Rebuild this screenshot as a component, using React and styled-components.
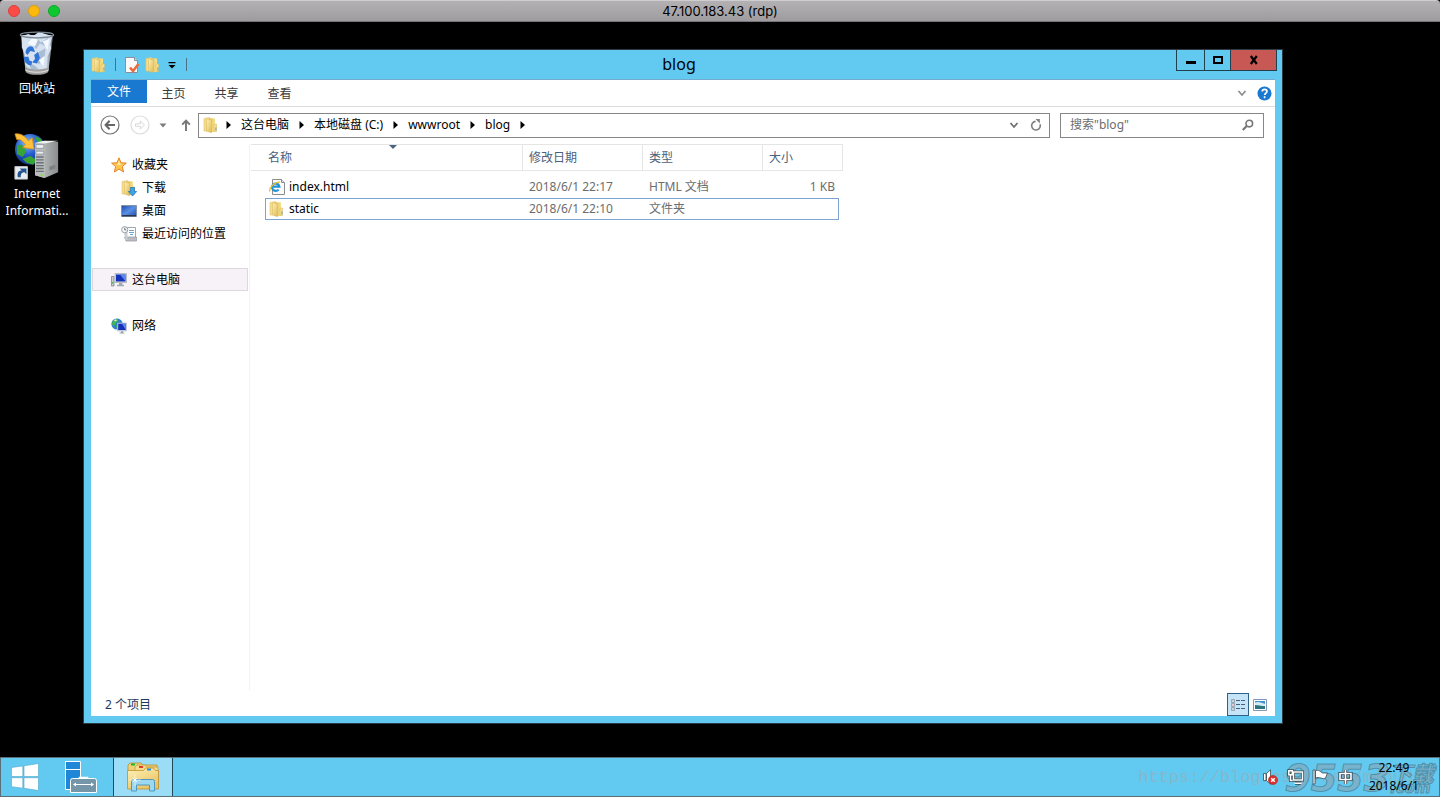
import React from "react";
import styled, { createGlobalStyle, css } from "styled-components";

const sky = "#62caf0";
const uiFont = `"Noto Sans", "Noto Sans CJK SC", sans-serif`;

const GlobalStyle = createGlobalStyle`
  *, *::before, *::after { box-sizing: border-box; }
  body { margin: 0; background: #000; font: 12px/16px ${uiFont}; color: #000; }
  button, input { font: inherit; color: inherit; border: 0; padding: 0; margin: 0; background: none; border-radius: 0; }
  a { color: inherit; text-decoration: none; }
  ul { list-style: none; margin: 0; padding: 0; }
  svg { display: block; flex: none; }
`;

const Screen = styled.div`
  display: flex;
  flex-direction: column;
  min-height: 100vh;
`;

/* ---------- session title bar ---------- */

const SessionBar = styled.header`
  display: grid;
  grid-template-columns: 1fr auto 1fr;
  align-items: center;
  height: 22px;
  padding: 0 8px;
  background: linear-gradient(#b3b1b3, #9f9ca0);
  border-top: 1px solid #cfcdd0;
  border-bottom: 1px solid #77757a;
  border-radius: 4px 4px 0 0;
`;

const SessionTitle = styled.h1`
  margin: 0;
  font: 400 13px/20px Inter, sans-serif;
`;

const Lights = styled.div`
  display: flex;
  gap: 8px;
`;

const Light = styled.button`
  width: 12px;
  height: 12px;
  border-radius: 50%;
  background: ${(p) => p.$fill};
  border: 1px solid ${(p) => p.$edge};
`;

/* ---------- desktop ---------- */

const Desktop = styled.main`
  display: flex;
  flex: 1;
  background: #000;
`;

const Shortcuts = styled.div`
  display: flex;
  flex-direction: column;
  gap: 36px;
  width: 74px;
  padding-top: 8px;
  margin-right: 9px;
`;

const Shortcut = styled.button`
  display: flex;
  flex-direction: column;
  align-items: center;
  gap: 4px;
  color: #fff;
  line-height: 17px;
`;

const Explorer = styled.section`
  display: flex;
  flex-direction: column;
  flex: 1;
  margin: 27px 157px 33px 0;
  padding: 0 7px 7px;
  background: ${sky};
  border: 1px solid #2b3b44;
`;

const TitleBar = styled.div`
  display: grid;
  grid-template-columns: 1fr auto 1fr;
  height: 30px;
  border-bottom: 1px solid #74acd0;
`;

const QuickAccess = styled.div`
  display: flex;
  align-items: center;
  gap: 5px;
`;

const Separator = styled.span`
  width: 1px;
  height: 13px;
  margin: 0 3px;
  background: #4d7186;
`;

const Title = styled.h2`
  margin: 0;
  padding-right: 8px;
  font-size: 16px;
  font-weight: 400;
  line-height: 28px;
`;

const WindowButtons = styled.div`
  display: flex;
  justify-self: end;
  margin-right: -2px;
  height: 21px;
  border: solid #21404e;
  border-width: 0 1px 1px;
`;

const WindowButton = styled.button`
  display: flex;
  align-items: center;
  justify-content: center;
  width: ${(p) => p.$width}px;
  background: ${(p) => (p.$close ? "#c75853" : "transparent")};
  & + & { border-left: 1px solid #21404e; }
`;

const Content = styled.div`
  display: flex;
  flex-direction: column;
  flex: 1;
  background: #fff;
`;

const Ribbon = styled.div`
  display: flex;
  align-items: flex-start;
  height: 27px;
  border-bottom: 1px solid #dadbdc;
`;

const RibbonTab = styled.button`
  width: 53px;
  height: 26px;
  padding-top: 2px;
  color: #3a3a3a;
  ${(p) =>
    p.$file &&
    css`
      width: 56px;
      height: 23px;
      padding-top: 0;
      background: #1979d0;
      color: #fff;
    `}
`;

const RibbonTools = styled.div`
  display: flex;
  align-items: center;
  gap: 10px;
  height: 26px;
  margin-left: auto;
  padding-right: 3px;
`;

const NavBar = styled.div`
  display: flex;
  align-items: center;
  height: 37px;
  padding: 0 11px 1px 8px;
`;

const NavButtons = styled.div`
  display: flex;
  align-items: center;
  gap: 8px;
  margin-right: 1px;
`;

const NavButton = styled.button`
  display: flex;
  align-items: center;
  justify-content: center;
  width: ${(p) => (p.$narrow ? 8 : 22)}px;
  height: 22px;
`;

const AddressBar = styled.div`
  display: flex;
  align-items: center;
  flex: 1;
  height: 25px;
  margin-right: 10px;
  padding: 0 2px 0 4px;
  border: 1px solid #868686;
`;

const Crumbs = styled.ul`
  display: flex;
  align-items: center;
  flex: 1;
  margin-left: 7px;
`;

const Crumb = styled.li`
  display: flex;
  align-items: center;
  gap: 10px;
  margin-right: 10px;
`;

const ToolButton = styled.button`
  display: flex;
  align-items: center;
  justify-content: center;
  width: 22px;
  height: 22px;
`;

const SearchBox = styled.form`
  display: flex;
  align-items: center;
  width: 204px;
  height: 25px;
  padding: 0 4px 0 9px;
  border: 1px solid #868686;
`;

const SearchInput = styled.input`
  flex: 1;
  min-width: 0;
  outline: 0;
  &::placeholder { color: #6d6d6d; opacity: 1; }
`;

const Body = styled.div`
  display: flex;
  flex: 1;
`;

const Sidebar = styled.nav`
  display: flex;
  flex-direction: column;
  gap: 23px;
  width: 159px;
  padding: 9px 1px 0;
  border-right: 1px solid #f3f3f4;
`;

const Place = styled.a`
  display: flex;
  align-items: center;
  gap: 5px;
  height: 23px;
  padding-left: ${(p) => (p.$nested ? 28 : 18)}px;
  border: 1px solid ${(p) => (p.$selected ? "#dcd8dc" : "transparent")};
  background: ${(p) => (p.$selected ? "#f7f2f7" : "transparent")};
`;

const FileTable = styled.table`
  align-self: flex-start;
  width: 592px;
  margin-left: 1px;
  table-layout: fixed;
  border-collapse: separate;
  border-spacing: 0;
  tbody::before { content: ""; display: table-row; height: 5px; }
`;

const HeadCell = styled.th`
  position: relative;
  width: ${(p) => p.$width}px;
  height: 27px;
  padding: 0 6px;
  border: 1px solid #e5e5e5;
  border-left: 0;
  color: #4c607a;
  font-weight: 400;
  text-align: left;
  &:first-child { padding-left: 17px; }
`;

const SortMark = styled.svg`
  position: absolute;
  top: 0;
  left: 50%;
`;

const FileRow = styled.tr`
  position: relative;
  ${(p) =>
    p.$focused &&
    css`
      &::after {
        content: "";
        position: absolute;
        inset: 0 4px 0 14px;
        border: 1px solid #7aa5d0;
      }
    `}
`;

const Cell = styled.td`
  height: 22px;
  padding: 0 8px 0 6px;
  color: #6d6d6d;
  text-align: ${(p) => (p.$right ? "right" : "left")};
`;

const NameCell = styled.td`
  height: 22px;
  padding: 0 0 0 18px;
  color: #000;
`;

const FileName = styled.span`
  display: flex;
  align-items: center;
  gap: 4px;
`;

const StatusBar = styled.footer`
  display: flex;
  align-items: flex-end;
  justify-content: space-between;
  height: 25px;
  padding: 0 4px 0 14px;
  color: #1e395b;
  line-height: 22px;
`;

const ViewButtons = styled.div`
  display: flex;
`;

const ViewButton = styled.button`
  display: flex;
  align-items: center;
  justify-content: center;
  width: 22px;
  height: 23px;
  border: 1px solid ${(p) => (p.$active ? "#2c628b" : "transparent")};
  background: ${(p) => (p.$active ? "#c5e4f7" : "transparent")};
`;

/* ---------- taskbar ---------- */

const Taskbar = styled.footer`
  position: relative;
  display: flex;
  height: 40px;
  background: ${sky};
  border: 1px solid #5b6f78;
`;

const TaskButton = styled.button`
  display: flex;
  align-items: center;
  justify-content: center;
  width: ${(p) => p.$width}px;
  border: solid ${(p) => (p.$active ? "#23485a" : "transparent")};
  border-width: 0 1px;
  background: ${(p) => (p.$active ? "#9bdcf7" : "transparent")};
`;

const Tray = styled.div`
  position: relative;
  display: flex;
  align-items: center;
  gap: 8px;
  margin-left: auto;
`;

const TrayButton = styled.button`
  display: flex;
  width: 17px;
`;

const Clock = styled.time`
  margin: 0 20px 0 7px;
  line-height: 18px;
  text-align: center;
`;

const LinkMark = styled.span`
  position: absolute;
  right: 5px;
  top: 8px;
  font: 17px/24px "Liberation Mono", monospace;
  color: rgba(165, 165, 165, 0.5);
  white-space: nowrap;
`;

const SiteMark = styled.span`
  position: absolute;
  right: 5px;
  top: 4px;
  display: flex;
  color: rgba(128, 172, 194, 0.75);
  font: italic 700 38px/32px "DejaVu Sans", sans-serif;
  -webkit-text-stroke: 1px rgba(60, 115, 140, 0.6);
`;

const SiteMarkEnd = styled.span`
  display: flex;
  flex-direction: column;
  font: italic 700 22px/21px "Noto Sans CJK SC", sans-serif;
`;

const SiteMarkSmall = styled.small`
  font: italic 700 15px/10px "DejaVu Sans", sans-serif;
`;

/* ---------- icons ---------- */

const FolderIcon = ({ arrow }) => (
  <svg width="16" height="16" viewBox="0 0 16 16" aria-hidden="true">
    <defs>
      <linearGradient id="folderFront" x1="0" x2="1" y2="1">
        <stop offset="0" stopColor="#fff2bb" />
        <stop offset="1" stopColor="#dfb94f" />
      </linearGradient>
      <linearGradient id="folderSide" x1="0" x2="1">
        <stop offset="0" stopColor="#e3c25f" />
        <stop offset="1" stopColor="#f6e08c" />
      </linearGradient>
    </defs>
    <path d="M1 1.500L6.500.5v13.500L1 14z" fill="#f4dd8c" stroke="#e3c570" strokeWidth=".6" />
    <path d="M6 1l6 .5v13.500L6 15z" fill="url(#folderSide)" />
    <path d="M3.500 1.800L8.500 3.200v12.600L3.500 14z" fill="url(#folderFront)" stroke="#d9b75a" strokeWidth=".5" />
    <path d="M11 7h2.500v7.500H11z" fill="#f5df90" stroke="#dcb95a" strokeWidth=".5" />
    {arrow ? (
      <path d="M9.500 7.500h4v4h2.200L11.500 16l-4.200-4.500h2.200z" fill="#3aa5ea" stroke="#1b6db4" strokeWidth=".7" />
    ) : (
      <path d="M12.400 10.500h1v3h-1z" fill="#5aa7d8" />
    )}
  </svg>
);

const PropertiesIcon = () => (
  <svg width="16" height="16" viewBox="0 0 16 16" aria-hidden="true">
    <path d="M1.500.5h9l3 3v12h-12z" fill="#fafafa" stroke="#8a8f99" />
    <path d="M10.500.5v3h3" fill="#d9dde2" stroke="#8a8f99" />
    <path d="M6 10.500l3 3.500 5.500-7" fill="none" stroke="#ec6a3a" strokeWidth="2.600" />
  </svg>
);

const MenuArrowIcon = () => (
  <svg width="12" height="8" viewBox="0 0 12 8" aria-hidden="true">
    <path d="M2.500 1h7v1.200h-7zM2.500 4h7L6 7.600z" fill="#000" />
  </svg>
);

const MinimizeIcon = () => (
  <svg width="10" height="10" viewBox="0 0 10 10" aria-hidden="true">
    <path d="M0 6h10v3H0z" />
  </svg>
);
const MaximizeIcon = () => (
  <svg width="10" height="10" viewBox="0 0 10 10" aria-hidden="true">
    <path d="M1 2h8v6H1z" fill="none" stroke="#000" strokeWidth="2" />
  </svg>
);
const CloseIcon = () => (
  <svg width="10" height="10" viewBox="0 0 10 10" aria-hidden="true">
    <path d="M1.800 1l6 8M7.800 1l-6 8" fill="none" stroke="#000" strokeWidth="2.200" />
  </svg>
);

const ChevronIcon = ({ color = "#8e8e8e" }) => (
  <svg width="10" height="8" viewBox="0 0 10 8" aria-hidden="true">
    <path d="M1.500 2L5 6l3.500-4" fill="none" stroke={color} strokeWidth="1.800" />
  </svg>
);

const HelpIcon = () => (
  <svg width="15" height="15" viewBox="0 0 15 15" aria-hidden="true">
    <circle cx="7.500" cy="7.500" r="7" fill="#1979d0" />
    <path d="M5.300 5.600c0-3 4.600-2.800 4.600-.2 0 1.700-2.200 1.700-2.200 3.600M7.600 10.200v2" fill="none" stroke="#fff" strokeWidth="1.700" />
  </svg>
);

const CircleArrowIcon = ({ forward }) => (
  <svg width="20" height="20" viewBox="0 0 20 20" aria-hidden="true">
    <circle cx="10" cy="10" r="9" fill="none" stroke={forward ? "#dcdcdc" : "#757575"} strokeWidth="1.200" />
    {forward ? (
      <path d="M5.500 8.800h4.800V6l4.200 4-4.200 4v-2.800H5.500z" fill="none" stroke="#d8d8d8" />
    ) : (
      <path d="M15 10H6M9.600 5.800L5.600 10l4 4.200" fill="none" stroke="#666" strokeWidth="2" />
    )}
  </svg>
);

const DownTriangleIcon = () => (
  <svg width="8" height="5" viewBox="0 0 8 5" aria-hidden="true">
    <path d="M.5.5h7L4 4.500z" fill="#7c7c7c" />
  </svg>
);
const UpIcon = () => (
  <svg width="10" height="12" viewBox="0 0 10 12" aria-hidden="true">
    <path d="M5 12V2M1.200 5.600L5 1.600l3.800 4" fill="none" stroke="#757575" strokeWidth="1.900" />
  </svg>
);
const CrumbArrowIcon = () => (
  <svg width="5" height="8" viewBox="0 0 5 8" aria-hidden="true">
    <path d="M.5 0L5 4 .5 8z" />
  </svg>
);
const RefreshIcon = () => (
  <svg width="12" height="12" viewBox="0 0 12 12" aria-hidden="true">
    <path d="M10 5.200A4.300 4.300 0 1 1 5.600 2.400" fill="none" stroke="#808080" strokeWidth="1.600" />
    <path d="M5.500 0h4.300v4.600z" fill="#808080" />
  </svg>
);
const SearchIcon = () => (
  <svg width="12" height="12" viewBox="0 0 12 12" aria-hidden="true">
    <circle cx="7.300" cy="4.600" r="3.300" fill="none" stroke="#777" strokeWidth="1.600" />
    <path d="M4.800 7L.8 11" stroke="#777" strokeWidth="2.200" />
  </svg>
);

const StarIcon = () => (
  <svg width="16" height="16" viewBox="0 0 16 16" aria-hidden="true">
    <path d="M8 .8l2 5 5.300.3-4 3.500 1.300 5.400L8 12.100 3.400 15l1.200-5.400-4-3.500L6 5.800z" fill="#fcc650" stroke="#e38426" />
    <path d="M8 3.500l1 3.300 3 .3-5.500 1z" fill="#fff0b0" />
  </svg>
);
const DesktopIcon = () => (
  <svg width="16" height="14" viewBox="0 0 16 14" aria-hidden="true">
    <defs>
      <linearGradient id="deskFill" x2="1" y2="1">
        <stop offset="0" stopColor="#1c48a8" />
        <stop offset=".5" stopColor="#5a90e4" />
        <stop offset="1" stopColor="#1b4aac" />
      </linearGradient>
    </defs>
    <path d="M.5 1.500h15v11H.5z" fill="url(#deskFill)" stroke="#8493a8" />
    <path d="M1 11h14v1.400H1z" fill="#28374f" />
  </svg>
);
const RecentIcon = () => (
  <svg width="16" height="16" viewBox="0 0 16 16" aria-hidden="true">
    <path d="M5.500 1.500h9v10h-9z" fill="#fff" stroke="#a4a6a8" />
    <path d="M8 4.500h5M8 6.500h5M9 8.500h3" stroke="#6fa3cc" strokeWidth="1.200" />
    <path d="M5 11h10.500v4H5l-1.500-4z" fill="#b9bdc2" stroke="#9b9fa4" strokeWidth=".8" />
    <path d="M3 6h3.500v8H4.500z" fill="#c9ccd0" />
    <circle cx="3.700" cy="3.700" r="3.100" fill="#f4f6f8" stroke="#9aa1a8" />
    <path d="M3.700 1.800v2.100h1.600" fill="none" stroke="#555" strokeWidth=".8" />
  </svg>
);
const ComputerIcon = () => (
  <svg width="16" height="16" viewBox="0 0 16 16" aria-hidden="true">
    <path d="M.5 4.500H3v9.500H.5z" fill="#c8ccd0" stroke="#81878d" strokeWidth=".8" />
    <path d="M1 10h1.500v1.600H1z" fill="#4fb64b" />
    <path d="M4 1.500h11.500v9H4z" fill="#d8dde3" stroke="#a9b1ba" strokeWidth=".8" />
    <path d="M5 2.500h9.500v7H5z" fill="#1431b8" />
    <path d="M9 2.500h5.500v7z" fill="#5e86ee" />
    <path d="M8 11h3.400v1.800H13v1.400H6v-1.400h2z" fill="#a2a8af" />
  </svg>
);
const NetworkIcon = () => (
  <svg width="16" height="16" viewBox="0 0 16 16" aria-hidden="true">
    <circle cx="6" cy="6" r="5.600" fill="#2f7fd0" />
    <path d="M2 2.500l4-1.800 1.500 2L5 5 3 8.500.8 6zM5 8l3-2 1 3-3 2z" fill="#43b549" />
    <path d="M3 2.200l2-1 1 1.300-2 1z" fill="#d9f0c8" />
    <path d="M6.500 5h9v8h-9z" fill="#ccd6e0" stroke="#a5b3c2" strokeWidth=".6" />
    <path d="M7.200 5.700h7.600V12H7.200z" fill="#1431b8" />
    <path d="M11 5.700h3.800V12z" fill="#5e86ee" />
    <path d="M10 13.200h2v1.400h1.400v1H8.600v-1H10z" fill="#98a2ac" />
  </svg>
);
const HtmlIcon = () => (
  <svg width="16" height="16" viewBox="0 0 16 16" aria-hidden="true">
    <path d="M3.500.5h9l3 3v12h-12z" fill="#fbfbfb" stroke="#8d8d8d" />
    <path d="M12.500.5v3h3" fill="#e4e4e4" stroke="#8d8d8d" />
    <path d="M9.600 10.600a3.700 3.700 0 1 1 .8-2.900H3.500" fill="none" stroke="#2292d8" strokeWidth="2.200" />
    <path d="M1 12.600C-.8 9.500 5.500 2.800 11 3.200" fill="none" stroke="#f2c230" strokeWidth="1.300" />
  </svg>
);

const DetailsViewIcon = () => (
  <svg width="16" height="14" viewBox="0 0 16 14" aria-hidden="true">
    {[0, 4, 8].map((y, i) => (
      <g key={y}>
        <path d={`M1.500 ${y + 1.5}h3v3h-3z`} fill="#fff" stroke="#8796a5" strokeWidth=".8" />
        <path d={`M2.500 ${y + 2.5}h1v1h-1z`} fill={i === 1 ? "#d02020" : "#30506c"} />
        <path d={`M6 ${y + 2.5}h4M11 ${y + 2.5}h4`} stroke="#46627c" />
      </g>
    ))}
  </svg>
);
const LargeViewIcon = () => (
  <svg width="14" height="12" viewBox="0 0 14 12" aria-hidden="true">
    <path d="M.5.5h13v11H.5z" fill="#fff" stroke="#8496b4" />
    <path d="M2 2h10v8H2z" fill="#3f93d4" />
    <path d="M2 3.500c4-1.500 6 0 10 1.500v2H2z" fill="#d5ecf4" />
    <path d="M2 6c3 0 6 1 10 1.500V10H2z" fill="#2b7480" />
  </svg>
);

const RecycleBinIcon = () => (
  <svg width="38" height="46" viewBox="0 0 40 48" aria-hidden="true">
    <defs>
      <linearGradient id="binGlass" x2="1">
        <stop offset="0" stopColor="#8796a5" />
        <stop offset=".25" stopColor="#c3d4e4" />
        <stop offset=".75" stopColor="#dbe5f0" />
        <stop offset="1" stopColor="#56626e" />
      </linearGradient>
    </defs>
    <path d="M3 5h34l-5 38c-3 4-21 4-24 0z" fill="url(#binGlass)" />
    <path d="M4 6l7-2 5 2 6-4 7 2 7 2-2 9 1 4-4 9-1 11-7 4-9-1-6-5-1-12-3-7z" fill="#d6e2ef" />
    <path d="M7 9l8 3 4-5 5 6 8-5-3 9-6-3-4 6-5-8zM20 24l9-5-1 9-6 8-3-4zM11 34l6 3 5 4-8 1z" fill="#aabdd2" />
    <path d="M16 7l5 3-3 7-8-3zM26 12l7-3-2 12zM22 32l6-5-1 11z" fill="#f4f9ff" />
    <ellipse cx="20" cy="5" rx="17.500" ry="3" fill="none" stroke="#7f8c98" strokeWidth="1.300" />
    <path d="M7.500 39c5 3 20 3 25 0l-.8 5c-4 4-20 4-23.500 0z" fill="#a0a0a0" />
    <path d="M8 42c6 3 18 3 24 0" fill="none" stroke="#e6e6e6" />
    <g fill="#2f74d8">
      <path d="M8 24c0-5 4-9 8-6l2 5-5-1-3 4z" />
      <path d="M17 26l4-3 2 6-3 6-5-1 3-4z" />
      <path d="M6 28l5 0 1 4 3 1-1 4c-5 0-8-4-8-9z" />
    </g>
  </svg>
);

const ServerIcon = () => (
  <svg width="48" height="48" viewBox="0 0 48 50" aria-hidden="true">
    <defs>
      <radialGradient id="globe" cx=".4" cy=".3" r=".75">
        <stop offset="0" stopColor="#8cc3f8" />
        <stop offset=".5" stopColor="#245bd0" />
        <stop offset="1" stopColor="#0d2470" />
      </radialGradient>
      <linearGradient id="tower" x2="1">
        <stop offset="0" stopColor="#c9cccb" />
        <stop offset="1" stopColor="#8a8d8d" />
      </linearGradient>
    </defs>
    <circle cx="17" cy="17" r="16" fill="url(#globe)" />
    <path d="M3 13l5-1 5 7-4 6-6-3zM22 3l6 3 3 5-6 1zM9 27l8-3 7 4-4 5-7-2z" fill="#38a435" />
    <path d="M1 1c6-1 10 2 14 7l4-3 2 12-12-2 3-3C9 8 6 6 3 7z" fill="#ffc23a" stroke="#d98912" strokeWidth=".8" />
    <path d="M22 11l9-3 15 1v32l-14 6-10-3z" fill="url(#tower)" />
    <path d="M22 11l10-1v37l-10-3z" fill="#b9bdbf" />
    <path d="M23 12h8v4h-8zM23 19h8v3h-8z" fill="#eceded" stroke="#777c80" strokeWidth=".6" />
    <path d="M23 25h8M23 28h8M23 31h8M23 34h8M23 37h8M23 40h8" stroke="#6a7074" strokeWidth="1.400" />
    <path d="M22 10l10-2h14l-14 3z" fill="#eff0f0" />
    <path d="M37 35l6-2v4l-6 2z" fill="#7d8182" />
    <circle cx="29" cy="44" r="1.200" fill="#82e026" />
    <path d="M1 35h13v13H1z" fill="#e8ecf0" stroke="#c3c9cf" />
    <path d="M4 46c-1-5 1-7 4-7l-2-2h7v6l-2-2c-3 0-4 2-4 5z" fill="#22558f" />
  </svg>
);

const StartIcon = () => (
  <svg width="28" height="28" viewBox="0 0 28 28" aria-hidden="true">
    <path d="M.5 4.500L11.800 3v10.500H.5zM13 2.800L27.500.5v13H13zM.5 14.700h11.300v10.500L.5 23.700zM13 14.700h14.500v12.800L13 25.300z" fill="#fff" stroke="#4ca6cb" strokeWidth=".6" />
  </svg>
);
const ServerManagerIcon = () => (
  <svg width="34" height="34" viewBox="0 0 34 34" aria-hidden="true">
    <path d="M1.500 1.500h15v28h-15z" fill="#1f87d8" stroke="#fff" />
    <path d="M1.500 9.500h15" stroke="#fff" />
    <path d="M15.500 20v-2.500h8V20" fill="none" stroke="#fff" strokeWidth="1.500" />
    <path d="M6.500 20.500q0-2 2-2h22q2 0 2 2v12h-26z" fill="#7596a8" stroke="#fff" />
    <path d="M10 24.500h19" stroke="#fff" />
    <path d="M12 22.500v4l-3-2zM27 22.500v4l3-2z" fill="#fff" />
  </svg>
);
const ExplorerIcon = () => (
  <svg width="34" height="32" viewBox="0 0 34 32" aria-hidden="true">
    <defs>
      <linearGradient id="explorerFolder" x2=".6" y2="1">
        <stop offset="0" stopColor="#fff2b9" />
        <stop offset="1" stopColor="#e8c362" />
      </linearGradient>
    </defs>
    <path d="M2 4l2-2h11l2 2h14v22H2z" fill="#ecd07a" stroke="#b88e2e" strokeWidth=".8" />
    <path d="M5 2.500h4v2H5z" fill="#18b62b" />
    <path d="M9 6l2-2h8l2 2h11v20H9z" fill="#f4dc8b" stroke="#c79f3e" strokeWidth=".8" />
    <path d="M13 5h4v2h-4z" fill="#df3c29" />
    <path d="M1.500 9.500h16l2-2.500h8l2 2.500h3V28h-31z" fill="url(#explorerFolder)" stroke="#c2922d" strokeWidth=".8" />
    <path d="M21 7.500h4v2h-4z" fill="#2590e2" />
    <path d="M5.500 30V20.500q0-2 2-2h19q2 0 2 2V30h-5v-6h-13v6z" fill="#9bd8f2" stroke="#5098bf" />
    <path d="M9 13v12M3 19h12" stroke="#fff" opacity=".6" />
    <path d="M7 17l4 4M11 17l-4 4" stroke="#fff" />
  </svg>
);

const SpeakerIcon = () => (
  <svg width="17" height="16" viewBox="0 0 17 16" aria-hidden="true">
    <path d="M1.500 4.500H4v7H1.500zM4.500 4.500L8.500.8v14.400l-4-3.700z" fill="#fff" stroke="#3b4a52" strokeWidth=".8" />
    <circle cx="11" cy="11" r="4.600" fill="#d9302c" stroke="#a82020" strokeWidth=".5" />
    <path d="M9.200 9.200l3.600 3.600M12.800 9.200l-3.600 3.600" stroke="#fff" strokeWidth="1.500" />
  </svg>
);
const WiredIcon = () => (
  <svg width="17" height="16" viewBox="0 0 17 16" aria-hidden="true">
    <g fill="none" stroke="#394850" strokeWidth="3">
      <path d="M6.500 3h9v8h-9zM8 14.200h6M1.800 1.800h3.500v4H1.800zM3.500 6v5.500h2" />
    </g>
    <g fill="none" stroke="#fff" strokeWidth="1.500">
      <path d="M6.500 3h9v8h-9zM7.500 14.200h7M1.800 1.800h3.500v4H1.800zM3.500 6v5.500h2" />
    </g>
  </svg>
);
const FlagIcon = () => (
  <svg width="17" height="16" viewBox="0 0 17 16" aria-hidden="true">
    <path d="M1 1h2v14H1zM3.500 2c3-2 5 1 7 2h5l-2 5c-3 2-6-2-10 0z" fill="#fff" stroke="#3b4a52" strokeWidth=".8" />
  </svg>
);
const InputMethodIcon = () => (
  <svg width="17" height="16" viewBox="0 0 17 16" aria-hidden="true">
    <path d="M3 4.500h11v6H3zM8.500 1v14" fill="none" stroke="#34444c" strokeWidth="3.200" />
    <path d="M3 4.500h11v6H3zM8.500 1v14" fill="none" stroke="#fff" strokeWidth="1.600" />
  </svg>
);

/* ---------- data ---------- */

const tabs = ["主页", "共享", "查看"];
const path = ["这台电脑", "本地磁盘 (C:)", "wwwroot", "blog"];

const places = [
  [
    { label: "收藏夹", icon: <StarIcon /> },
    { label: "下载", icon: <FolderIcon arrow />, nested: true },
    { label: "桌面", icon: <DesktopIcon />, nested: true },
    { label: "最近访问的位置", icon: <RecentIcon />, nested: true },
  ],
  [{ label: "这台电脑", icon: <ComputerIcon />, selected: true }],
  [{ label: "网络", icon: <NetworkIcon /> }],
];

const columns = [
  { label: "名称", width: 272, sorted: true },
  { label: "修改日期", width: 120 },
  { label: "类型", width: 120 },
  { label: "大小", width: 80 },
];

const files = [
  { name: "index.html", date: "2018/6/1 22:17", type: "HTML 文档", size: "1 KB", icon: <HtmlIcon /> },
  { name: "static", date: "2018/6/1 22:10", type: "文件夹", size: "", icon: <FolderIcon />, focused: true },
];

const trayItems = [
  { label: "音量", icon: <SpeakerIcon /> },
  { label: "网络", icon: <WiredIcon /> },
  { label: "操作中心", icon: <FlagIcon /> },
  { label: "输入法", icon: <InputMethodIcon /> },
];

export default function App() {
  return (
    <Screen>
      <GlobalStyle />
      <SessionBar>
        <Lights>
          <Light $fill="#fc4b47" $edge="#d9413d" aria-label="Close" />
          <Light $fill="#fdb90b" $edge="#dd9f0c" aria-label="Minimize" />
          <Light $fill="#0dc92e" $edge="#0ba827" aria-label="Zoom" />
        </Lights>
        <SessionTitle>47.100.183.43 (rdp)</SessionTitle>
      </SessionBar>

      <Desktop>
        <Shortcuts>
          <Shortcut>
            <RecycleBinIcon />
            <span>回收站</span>
          </Shortcut>
          <Shortcut>
            <ServerIcon />
            <span>Internet<br />Informati...</span>
          </Shortcut>
        </Shortcuts>

        <Explorer>
          <TitleBar>
            <QuickAccess>
              <FolderIcon />
              <Separator />
              <PropertiesIcon />
              <FolderIcon />
              <MenuArrowIcon />
              <Separator />
            </QuickAccess>
            <Title>blog</Title>
            <WindowButtons>
              <WindowButton $width={27} aria-label="最小化"><MinimizeIcon /></WindowButton>
              <WindowButton $width={26} aria-label="最大化"><MaximizeIcon /></WindowButton>
              <WindowButton $width={46} $close aria-label="关闭"><CloseIcon /></WindowButton>
            </WindowButtons>
          </TitleBar>

          <Content>
            <Ribbon>
              <RibbonTab $file>文件</RibbonTab>
              {tabs.map((t) => <RibbonTab key={t}>{t}</RibbonTab>)}
              <RibbonTools>
                <button aria-label="展开功能区"><ChevronIcon /></button>
                <button aria-label="帮助"><HelpIcon /></button>
              </RibbonTools>
            </Ribbon>

            <NavBar>
              <NavButtons>
                <NavButton aria-label="后退"><CircleArrowIcon /></NavButton>
                <NavButton aria-label="前进"><CircleArrowIcon forward /></NavButton>
                <NavButton $narrow aria-label="最近位置"><DownTriangleIcon /></NavButton>
                <NavButton aria-label="上移"><UpIcon /></NavButton>
              </NavButtons>
              <AddressBar>
                <FolderIcon />
                <Crumbs>
                  <Crumb><CrumbArrowIcon /></Crumb>
                  {path.map((p) => (
                    <Crumb key={p}>
                      <button>{p}</button>
                      <CrumbArrowIcon />
                    </Crumb>
                  ))}
                </Crumbs>
                <ToolButton aria-label="以前的位置"><ChevronIcon color="#6f6f6f" /></ToolButton>
                <ToolButton aria-label="刷新"><RefreshIcon /></ToolButton>
              </AddressBar>
              <SearchBox onSubmit={(e) => e.preventDefault()}>
                <SearchInput type="text" aria-label="搜索" placeholder={'搜索"blog"'} />
                <ToolButton aria-label="搜索"><SearchIcon /></ToolButton>
              </SearchBox>
            </NavBar>

            <Body>
              <Sidebar>
                {places.map((group) => (
                  <ul key={group[0].label}>
                    {group.map((p) => (
                      <li key={p.label}>
                        <Place href="#" $nested={p.nested} $selected={p.selected}>
                          {p.icon}
                          {p.label}
                        </Place>
                      </li>
                    ))}
                  </ul>
                ))}
              </Sidebar>
              <FileTable>
                <thead>
                  <tr>
                    {columns.map((c) => (
                      <HeadCell key={c.label} $width={c.width} scope="col">
                        {c.label}
                        {c.sorted && (
                          <SortMark width="11" height="5" viewBox="0 0 11 5" aria-hidden="true">
                            <path d="M2 0h8L6 4z" fill="#4c6482" />
                          </SortMark>
                        )}
                      </HeadCell>
                    ))}
                  </tr>
                </thead>
                <tbody>
                  {files.map((f) => (
                    <FileRow key={f.name} $focused={f.focused}>
                      <NameCell><FileName>{f.icon}{f.name}</FileName></NameCell>
                      <Cell>{f.date}</Cell>
                      <Cell>{f.type}</Cell>
                      <Cell $right>{f.size}</Cell>
                    </FileRow>
                  ))}
                </tbody>
              </FileTable>
            </Body>

            <StatusBar>
              <span>2 个项目</span>
              <ViewButtons>
                <ViewButton $active aria-label="详细信息"><DetailsViewIcon /></ViewButton>
                <ViewButton aria-label="大图标"><LargeViewIcon /></ViewButton>
              </ViewButtons>
            </StatusBar>
          </Content>
        </Explorer>
      </Desktop>

      <Taskbar>
        <TaskButton $width={48} aria-label="开始"><StartIcon /></TaskButton>
        <TaskButton $width={64} aria-label="服务器管理器"><ServerManagerIcon /></TaskButton>
        <TaskButton $width={60} $active aria-label="文件资源管理器"><ExplorerIcon /></TaskButton>
        <LinkMark>https://blog.csdn.net/mihudie</LinkMark>
        <SiteMark>
          9553
          <SiteMarkEnd>
            下载
            <SiteMarkSmall>.com</SiteMarkSmall>
          </SiteMarkEnd>
        </SiteMark>
        <Tray>
          {trayItems.map((t) => (
            <TrayButton key={t.label} aria-label={t.label}>{t.icon}</TrayButton>
          ))}
          <Clock dateTime="2018-06-01T22:49">22:49<br />2018/6/1</Clock>
        </Tray>
      </Taskbar>
    </Screen>
  );
}
